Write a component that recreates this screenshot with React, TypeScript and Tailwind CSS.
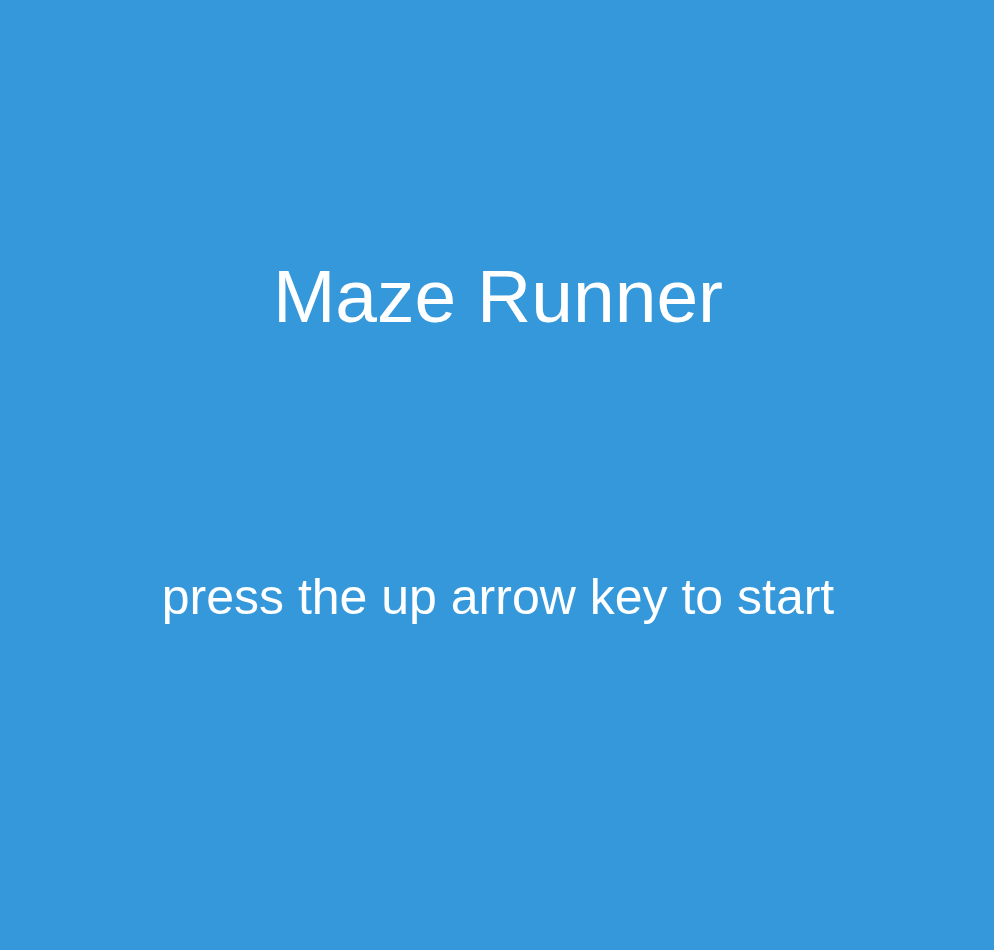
export default function App() {
  return (
    <div className="flex h-[950px] w-full flex-col items-center bg-[#3498db] pt-[259px] font-['Liberation_Sans',Arial,sans-serif] text-white">
      <h1 className="pl-[2px] text-[75px] leading-none">Maze Runner</h1>
      <p className="mt-[238px] pl-[2px] text-[50px] leading-none">press the up arrow key to start</p>
    </div>
  );
}
